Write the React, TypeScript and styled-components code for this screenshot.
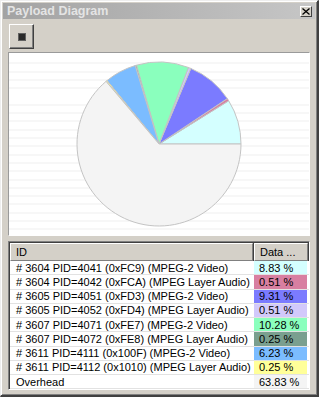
import React from 'react'
import styled, { createGlobalStyle } from 'styled-components'

const GlobalStyle = createGlobalStyle`
  html, body { margin: 0; padding: 0; background: #d4d0c8; }
  * { box-sizing: border-box; }
`

const rows = [
  { id: '# 3604 PID=4041 (0xFC9) (MPEG-2 Video)', pct: 8.83, color: '#d4ffff' },
  { id: '# 3604 PID=4042 (0xFCA) (MPEG Layer Audio)', pct: 0.51, color: '#d87fa1' },
  { id: '# 3605 PID=4051 (0xFD3) (MPEG-2 Video)', pct: 9.31, color: '#7b7bff' },
  { id: '# 3605 PID=4052 (0xFD4) (MPEG Layer Audio)', pct: 0.51, color: '#d2c9fb' },
  { id: '# 3607 PID=4071 (0xFE7) (MPEG-2 Video)', pct: 10.28, color: '#8affbd' },
  { id: '# 3607 PID=4072 (0xFE8) (MPEG Layer Audio)', pct: 0.25, color: '#7a9f8f' },
  { id: '# 3611 PID=4111 (0x100F) (MPEG-2 Video)', pct: 6.23, color: '#7bbcff' },
  { id: '# 3611 PID=4112 (0x1010) (MPEG Layer Audio)', pct: 0.25, color: '#ffff99' },
  { id: 'Overhead', pct: 63.83, color: '#f4f4f4' },
]

function Pie() {
  const c = 83
  const r = 82
  let acc = 0
  const pt = (p: number) => {
    const a = (p / 100) * Math.PI * 2
    return [c + r * Math.cos(a), c - r * Math.sin(a)]
  }
  return (
    <svg width={166} height={166} viewBox="0 0 166 166">
      {rows.map((row, i) => {
        const [x1, y1] = pt(acc)
        acc += row.pct
        const [x2, y2] = pt(acc)
        const large = row.pct > 50 ? 1 : 0
        return (
          <path
            key={i}
            d={`M${c},${c} L${x1},${y1} A${r},${r} 0 ${large} 0 ${x2},${y2} Z`}
            fill={row.color}
            stroke="#c4c4c4"
            strokeWidth={1}
            strokeLinejoin="round"
          />
        )
      })}
    </svg>
  )
}

export default function App() {
  return (
    <>
      <GlobalStyle />
      <Window>
        <TitleBar>
          <Title>Payload Diagram</Title>
          <CloseButton>
            <svg width="8" height="7" viewBox="0 0 8 7">
              <path d="M0.5,0.5 L7.5,6.5 M7.5,0.5 L0.5,6.5" stroke="#000" strokeWidth="1.3" />
            </svg>
          </CloseButton>
        </TitleBar>
        <Toolbar>
          <ToolButton>
            <StopGlyph />
          </ToolButton>
        </Toolbar>
        <ChartPanel>
          <Pie />
        </ChartPanel>
        <List>
          <HeaderRow>
            <HeaderCell width={243}>ID</HeaderCell>
            <HeaderCell width={54}>Data ...</HeaderCell>
            <HeaderFiller />
          </HeaderRow>
          {rows.map((row, i) => (
            <Row key={i}>
              <IdCell>{row.id}</IdCell>
              <DataCell bg={row.color}>{row.pct.toFixed(2)} %</DataCell>
            </Row>
          ))}
        </List>
      </Window>
    </>
  )
}

const Window = styled.div`
width: 319px;
height: 397px;
display: flex;
flex-direction: column;
background: #d4d0c8;
border-style: solid;
border-width: 1px 2px 2px 1px;
border-color: #eeeeee #404040 #404040 #eeeeee;
box-shadow: inset 1px 1px #ffffff, inset -1px -1px #808080;
padding: 2px 7px 5px 7px;
font-family: "Liberation Sans", Arial, sans-serif;
font-size: 11px;
color: #000;
`

const TitleBar = styled.div`
height: 16px;
margin: 0 -5px;
padding: 0 3px 0 4px;
display: flex;
align-items: center;
justify-content: space-between;
background: linear-gradient(90deg, #a3a3a3, #c6c6c6);
`

const Title = styled.span`
font-weight: bold;
font-size: 12.5px;
color: #e4e4e4;
`

const CloseButton = styled.div`
width: 12px;
height: 11px;
display: flex;
align-items: center;
justify-content: center;
background: #d4d0c8;
border-style: solid;
border-width: 1px;
border-color: #ffffff #404040 #404040 #ffffff;
`

const Toolbar = styled.div`
display: flex;
margin-top: 5px;
padding-left: 1px;
`

const ToolButton = styled.div`
width: 25px;
height: 25px;
display: flex;
align-items: center;
justify-content: center;
background: #d4d0c8;
border-style: solid;
border-width: 1px;
border-color: #ffffff #404040 #404040 #ffffff;
box-shadow: inset -1px -1px #808080;
`

const StopGlyph = styled.div`
width: 8px;
height: 8px;
background: #2a2a2a;
border: 1px solid #606060;
`

const ChartPanel = styled.div`
margin-top: 3px;
height: 184px;
display: flex;
align-items: center;
justify-content: center;
border-style: solid;
border-width: 1px;
border-color: #9a9a9a #ffffff #ffffff #9a9a9a;
background-color: #ffffff;
background-image: repeating-linear-gradient(to bottom, transparent 0 7.3px, #eeeeee 7.3px 8.3px);
background-position: 0 2.5px;
`

const List = styled.div`
margin-top: 5px;
height: 149px;
display: flex;
flex-direction: column;
background: #ffffff;
border-style: solid;
border-width: 1px;
border-color: #808080 #ffffff #ffffff #808080;
box-shadow: inset 1px 1px #404040;
padding: 1px 0 0 1px;
overflow: hidden;
`

const HeaderRow = styled.div`
display: flex;
height: 18px;
flex: none;
background: #d4d0c8;
`

const HeaderCell = styled.div<{ width: number }>`
width: ${(p) => p.width}px;
flex: none;
display: flex;
align-items: center;
padding-left: 5px;
border-style: solid;
border-width: 1px;
border-color: #ffffff #808080 #808080 #ffffff;
box-shadow: 1px 0 #404040;
margin-right: 1px;
`

const HeaderFiller = styled.div`
flex: 1;
border-style: solid;
border-width: 1px 0 1px 1px;
border-color: #ffffff #808080 #808080 #ffffff;
`

const Row = styled.div`
display: flex;
height: 14.25px;
flex: none;
border-bottom: 1px solid #e2e2e2;
`

const IdCell = styled.div`
width: 243px;
flex: none;
padding-left: 6px;
display: flex;
align-items: center;
white-space: nowrap;
overflow: hidden;
`

const DataCell = styled.div<{ bg: string }>`
width: 53px;
flex: none;
margin-left: 1px;
padding-left: 5px;
display: flex;
align-items: center;
background: ${(p) => p.bg};
`
